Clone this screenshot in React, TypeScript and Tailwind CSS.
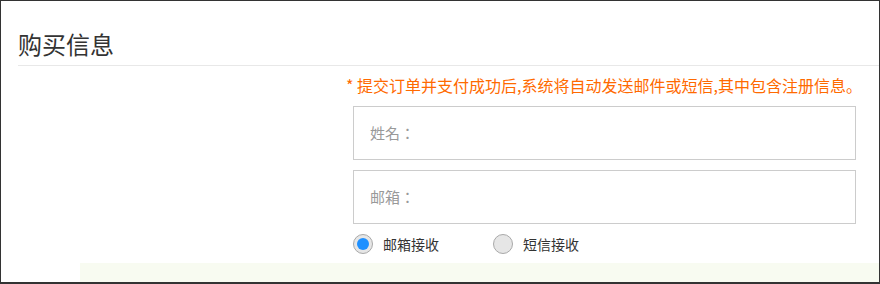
import React from "react";

function Radio({ checked, label }: { checked?: boolean; label: string }) {
  return (
    <label className="flex items-center gap-[10px] cursor-pointer">
      <span className="flex h-[20px] w-[20px] items-center justify-center rounded-full border border-[#a9a9a9] bg-[#e6e6e6]">
        {checked && <span className="h-[12px] w-[12px] rounded-full bg-[#1e90ff]" />}
      </span>
      <span className="text-[14px] leading-[20px] text-[#333]">{label}</span>
    </label>
  );
}

function Field({ label }: { label: string }) {
  return (
    <div className="ml-[352px] flex h-[54px] w-[503px] items-center border border-[#cccccc] bg-white pl-[16px]">
      <span className="text-[15px] text-[#999] [font-family:'Noto_Sans_CJK_TC',sans-serif]">{label}</span>
    </div>
  );
}

export default function App() {
  return (
    <div
      className="flex h-[284px] w-[880px] flex-col overflow-hidden border border-b-2 border-[#333] bg-white"
      style={{ fontFamily: '"Noto Sans CJK SC", "Noto Sans", sans-serif' }}
    >
      <div className="ml-[17px] border-b border-[#e8e8e8] pb-[3px] pt-[25px]">
        <h2 className="text-[24px] leading-[36px] font-normal text-[#333]">购买信息</h2>
      </div>

      <p className="ml-[345px] mt-[7px] text-[16px] leading-[24px] text-[#ff6a00] whitespace-nowrap">
        * 提交订单并支付成功后,系统将自动发送邮件或短信,其中包含注册信息。
      </p>

      <div className="mt-[9px] flex flex-col gap-[10px]">
        <Field label="姓名：" />
        <Field label="邮箱：" />
      </div>

      <div className="ml-[352px] mt-[10px] flex h-[20px] items-center gap-[54px]">
        <Radio checked label="邮箱接收" />
        <Radio label="短信接收" />
      </div>

      <div className="ml-[79px] mt-[9px] flex-1 bg-[#f8fbf1]" />
    </div>
  );
}
